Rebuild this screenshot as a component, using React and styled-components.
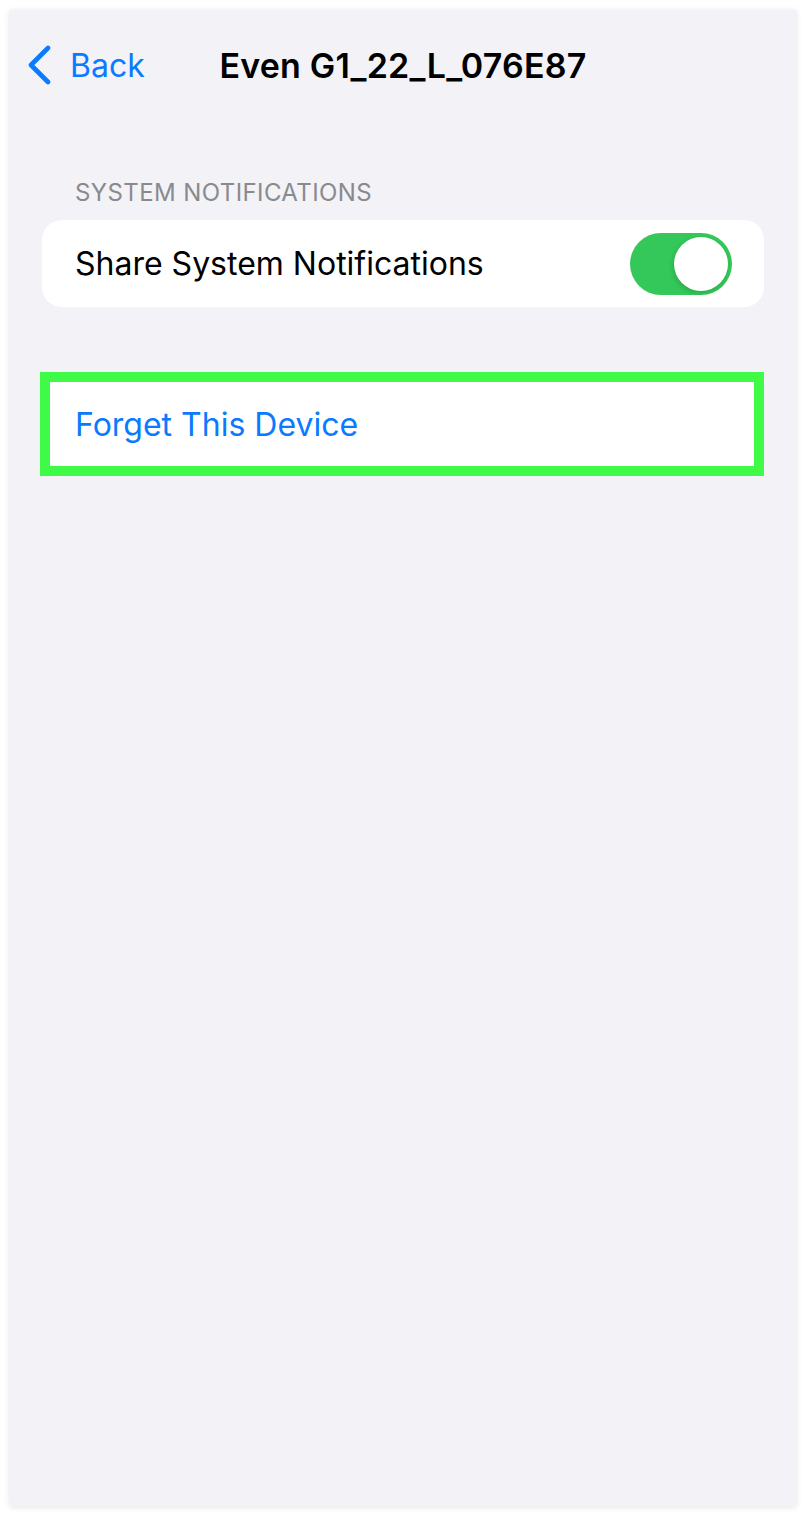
import React, { useState } from 'react';
import styled, { createGlobalStyle } from 'styled-components';

const GlobalStyle = createGlobalStyle`
  html, body {
    margin: 0;
    padding: 0;
    background: #ffffff;
  }
  body {
    font-family: Inter, "Liberation Sans", Arial, sans-serif;
    -webkit-font-smoothing: antialiased;
  }
`;

const Screen = styled.div`
  margin: 10px;
  width: 786px;
  height: 1496px;
  background: #f2f2f7;
  box-shadow: 0 1px 6px rgba(0, 0, 0, 0.12);
  display: flex;
  flex-direction: column;
`;

const NavBar = styled.header`
  position: relative;
  height: 110px;
  display: flex;
  align-items: center;
  justify-content: center;
`;

const BackButton = styled.button`
  position: absolute;
  left: 16px;
  top: 50%;
  transform: translateY(-50%);
  display: flex;
  align-items: center;
  gap: 18px;
  border: 0;
  background: none;
  padding: 0;
  color: #0a7aff;
  font-family: inherit;
  font-size: 32px;
  cursor: pointer;
`;

const Title = styled.h1`
  margin: 0;
  font-size: 34px;
  font-weight: 600;
  color: #000;
  letter-spacing: 0.2px;
`;

const Content = styled.main`
  padding: 0 32px;
  display: flex;
  flex-direction: column;
`;

const SectionHeader = styled.div`
  margin-top: 44px;
  padding-left: 33px;
  font-size: 24px;
  color: #8a8a8e;
  letter-spacing: 0.4px;
  text-transform: uppercase;
  height: 56px;
  display: flex;
  align-items: center;
`;

const Card = styled.section`
  background: #fff;
  border-radius: ${({ $square }) => ($square ? '0' : '20px')};
  border: ${({ $highlight }) => ($highlight ? '10px solid #3ffb47' : '0')};
  margin-top: ${({ $gap }) => $gap || 0}px;
  margin-left: ${({ $highlight }) => ($highlight ? '-2px' : '0')};
`;

const Row = styled.div`
  height: ${({ $h }) => $h || 87}px;
  display: flex;
  align-items: center;
  justify-content: space-between;
  padding: 0 32px 0 ${({ $pl }) => $pl || 33}px;
`;

const Label = styled.span`
  font-size: 32px;
  color: ${({ $action }) => ($action ? '#0a7aff' : '#000')};
`;

const Track = styled.button`
  width: 102px;
  height: 62px;
  border-radius: 31px;
  border: 0;
  padding: 4px;
  background: ${({ $on }) => ($on ? '#34c759' : '#e9e9eb')};
  display: flex;
  justify-content: ${({ $on }) => ($on ? 'flex-end' : 'flex-start')};
  cursor: pointer;
`;

const Knob = styled.span`
  width: 54px;
  height: 54px;
  border-radius: 50%;
  background: #fff;
  box-shadow: -1px 2px 5px rgba(0, 0, 0, 0.15);
`;

const Chevron = () => (
  <svg width="26" height="40" viewBox="0 0 26 40" fill="none">
    <polyline
      points="22,3 5,20 22,37"
      stroke="#0a7aff"
      strokeWidth="4.6"
      strokeLinecap="round"
      strokeLinejoin="round"
    />
  </svg>
);

export default function App() {
  const [share, setShare] = useState(true);

  return (
    <>
      <GlobalStyle />
      <Screen>
        <NavBar>
          <BackButton>
            <Chevron />
            Back
          </BackButton>
          <Title>Even G1_22_L_076E87</Title>
        </NavBar>

        <Content>
          <SectionHeader>System Notifications</SectionHeader>
          <Card>
            <Row>
              <Label>Share System Notifications</Label>
              <Track $on={share} onClick={() => setShare(!share)}>
                <Knob />
              </Track>
            </Row>
          </Card>

          <Card $highlight $square $gap={65}>
            <Row $h={84} $pl={25}>
              <Label $action>Forget This Device</Label>
            </Row>
          </Card>
        </Content>
      </Screen>
    </>
  );
}
